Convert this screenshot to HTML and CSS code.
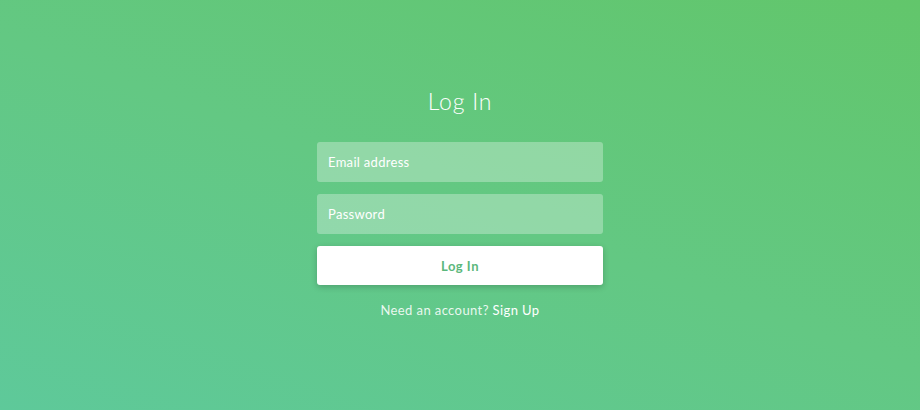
FILE: index.html
```html
<!DOCTYPE html>
<html lang="en">
<head>
    <meta charset="UTF-8">
    <meta name="viewport" content="width=device-width, initial-scale=1.0">
    <title>Log In</title>
    <link rel="stylesheet" href="styles.css">
</head>
<body>
    <div class="container">
        <h2>Log In</h2>
        <form id="loginForm">
            <input type="email" id="loginEmail" placeholder="Email address">
            <input type="password" id="loginPassword" placeholder="Password">
            <button type="submit">Log In</button>
        </form>
        <p class="signup">Need an account? <a href="#">Sign Up</a></p>
    </div>
</body>
</html>
```

FILE: styles.css
```css
html, body {
    margin: 0;
    height: 100%;
}
body {
    font-family: Lato, "Open Sans", sans-serif;
    background: linear-gradient(20deg, #5ec99a 0%, #63c883 50%, #62c66b 100%);
    color: #fff;
}
.container {
    width: 286px;
    margin: 0 auto;
    padding-top: 87px;
}
.container h2 {
    text-align: center;
    font-size: 23px;
    font-weight: 300;
    letter-spacing: 0.8px;
    margin: 0 0 27px;
    line-height: 28px;
}
.container form {
    display: flex;
    flex-direction: column;
    gap: 12px;
}
.container form input {
    height: 40px;
    box-sizing: border-box;
    padding: 0 11px;
    font-family: inherit;
    font-size: 13px;
    letter-spacing: 0.3px;
    color: #fff;
    background-color: rgba(255, 255, 255, 0.3);
    border: none;
    border-radius: 3px;
    outline: none;
}
.container form input::placeholder {
    color: #fff;
}
.container form button {
    height: 39px;
    font-family: inherit;
    font-size: 13px;
    font-weight: 700;
    letter-spacing: 0.5px;
    color: #5bb87c;
    background-color: #fff;
    border: none;
    border-radius: 3px;
    box-shadow: 0 2px 6px rgba(0, 0, 0, 0.2);
    cursor: pointer;
}
.container .signup {
    text-align: center;
    font-size: 13px;
    letter-spacing: 0.4px;
    margin: 17px 0 0;
    color: rgba(255, 255, 255, 0.88);
}
.container .signup a {
    color: #fff;
    font-weight: 400;
    text-decoration: none;
}
```
